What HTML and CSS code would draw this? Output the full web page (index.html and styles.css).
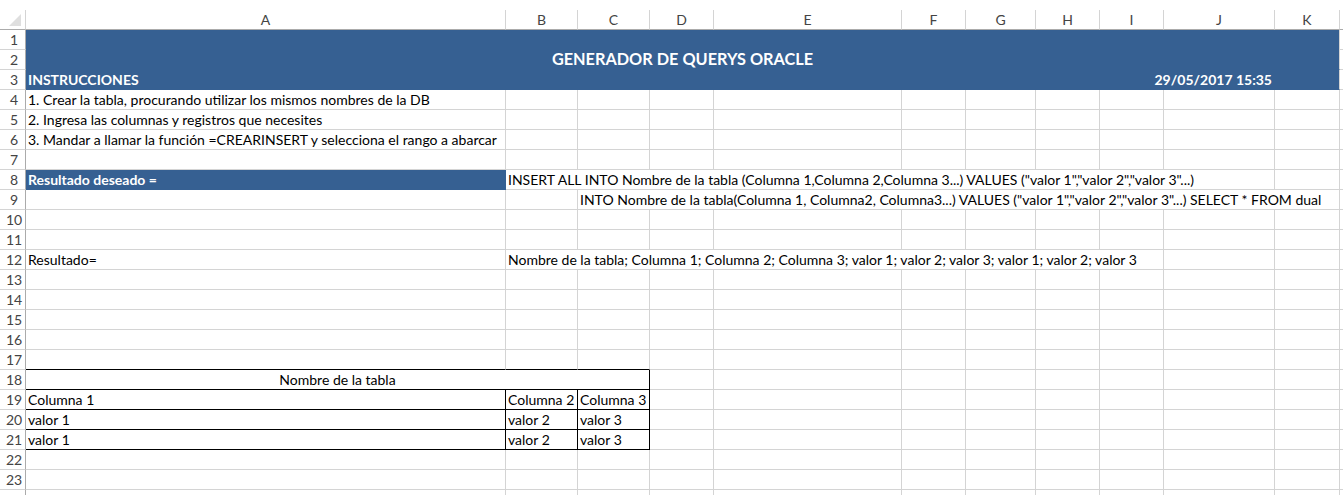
FILE: index.html
```html
<!DOCTYPE html>
<html lang="es">
<head>
    <meta charset="UTF-8">
    <meta name="viewport" content="width=device-width, initial-scale=1.0">
    <title>Generador de querys Oracle</title>
    <link rel="stylesheet" href="styles.css">
</head>
<body>
    <table class="sheet">
        <colgroup>
            <col class="w-head">
            <col class="w-a">
            <col class="w-b">
            <col class="w-c">
            <col class="w-d">
            <col class="w-e">
            <col class="w-f">
            <col class="w-g">
            <col class="w-h">
            <col class="w-i">
            <col class="w-j">
            <col class="w-k">
            <col class="w-l">
        </colgroup>
        <thead>
            <tr class="letters">
                <th class="corner"><span class="tri"></span></th>
                <th>A</th><th>B</th><th>C</th><th>D</th><th>E</th><th>F</th>
                <th>G</th><th>H</th><th>I</th><th>J</th><th>K</th><th class="rest"></th>
            </tr>
        </thead>
        <tbody>
            <tr>
                <th>1</th>
                <td class="band title" colspan="11" rowspan="2">GENERADOR DE QUERYS ORACLE</td>
                <td></td>
            </tr>
            <tr><th>2</th><td></td></tr>
            <tr>
                <th>3</th>
                <td class="band bold">INSTRUCCIONES</td>
                <td class="band" colspan="7"></td>
                <td class="band bold right" colspan="2">29/05/2017 15:35</td>
                <td class="band last"></td>
                <td></td>
            </tr>
            <tr>
                <th>4</th>
                <td>1. Crear la tabla, procurando utilizar los mismos nombres de la DB</td>
                <td></td><td></td><td></td><td></td><td></td><td></td><td></td><td></td><td></td><td></td><td></td>
            </tr>
            <tr>
                <th>5</th>
                <td>2. Ingresa las columnas y registros que necesites</td>
                <td></td><td></td><td></td><td></td><td></td><td></td><td></td><td></td><td></td><td></td><td></td>
            </tr>
            <tr>
                <th>6</th>
                <td>3. Mandar a llamar la función =CREARINSERT y selecciona el rango a abarcar</td>
                <td></td><td></td><td></td><td></td><td></td><td></td><td></td><td></td><td></td><td></td><td></td>
            </tr>
            <tr>
                <th>7</th>
                <td></td><td></td><td></td><td></td><td></td><td></td><td></td><td></td><td></td><td></td><td></td><td></td>
            </tr>
            <tr>
                <th>8</th>
                <td class="band bold">Resultado deseado =</td>
                <td colspan="9">INSERT ALL INTO Nombre de la tabla (Columna 1,Columna 2,Columna 3...) VALUES ("valor 1","valor 2","valor 3"...)</td>
                <td></td><td></td>
            </tr>
            <tr>
                <th>9</th>
                <td></td><td></td>
                <td colspan="9">INTO Nombre de la tabla(Columna 1, Columna2, Columna3...) VALUES ("valor 1","valor 2","valor 3"...) SELECT * FROM dual</td>
                <td></td>
            </tr>
            <tr>
                <th>10</th>
                <td></td><td></td><td></td><td></td><td></td><td></td><td></td><td></td><td></td><td></td><td></td><td></td>
            </tr>
            <tr>
                <th>11</th>
                <td></td><td></td><td></td><td></td><td></td><td></td><td></td><td></td><td></td><td></td><td></td><td></td>
            </tr>
            <tr>
                <th>12</th>
                <td>Resultado=</td>
                <td colspan="8">Nombre de la tabla; Columna 1; Columna 2; Columna 3; valor 1; valor 2; valor 3; valor 1; valor 2; valor 3</td>
                <td></td><td></td><td></td>
            </tr>
            <tr>
                <th>13</th>
                <td></td><td></td><td></td><td></td><td></td><td></td><td></td><td></td><td></td><td></td><td></td><td></td>
            </tr>
            <tr>
                <th>14</th>
                <td></td><td></td><td></td><td></td><td></td><td></td><td></td><td></td><td></td><td></td><td></td><td></td>
            </tr>
            <tr>
                <th>15</th>
                <td></td><td></td><td></td><td></td><td></td><td></td><td></td><td></td><td></td><td></td><td></td><td></td>
            </tr>
            <tr>
                <th>16</th>
                <td></td><td></td><td></td><td></td><td></td><td></td><td></td><td></td><td></td><td></td><td></td><td></td>
            </tr>
            <tr>
                <th>17</th>
                <td class="box-top"></td><td class="box-top"></td><td class="box-top"></td>
                <td></td><td></td><td></td><td></td><td></td><td></td><td></td><td></td><td></td>
            </tr>
            <tr>
                <th>18</th>
                <td class="box center" colspan="3">Nombre de la tabla</td>
                <td></td><td></td><td></td><td></td><td></td><td></td><td></td><td></td><td></td>
            </tr>
            <tr>
                <th>19</th>
                <td class="box">Columna 1</td><td class="box">Columna 2</td><td class="box">Columna 3</td>
                <td></td><td></td><td></td><td></td><td></td><td></td><td></td><td></td><td></td>
            </tr>
            <tr>
                <th>20</th>
                <td class="box">valor 1</td><td class="box">valor 2</td><td class="box">valor 3</td>
                <td></td><td></td><td></td><td></td><td></td><td></td><td></td><td></td><td></td>
            </tr>
            <tr>
                <th>21</th>
                <td class="box">valor 1</td><td class="box">valor 2</td><td class="box">valor 3</td>
                <td></td><td></td><td></td><td></td><td></td><td></td><td></td><td></td><td></td>
            </tr>
            <tr>
                <th>22</th>
                <td></td><td></td><td></td><td></td><td></td><td></td><td></td><td></td><td></td><td></td><td></td><td></td>
            </tr>
            <tr>
                <th>23</th>
                <td></td><td></td><td></td><td></td><td></td><td></td><td></td><td></td><td></td><td></td><td></td><td></td>
            </tr>
            <tr>
                <th></th>
                <td></td><td></td><td></td><td></td><td></td><td></td><td></td><td></td><td></td><td></td><td></td><td></td>
            </tr>
        </tbody>
    </table>
</body>
</html>
```

FILE: styles.css
```css
body {
    margin: 0;
    padding-top: 10px;
    background: #fff;
    font-family: Lato, "Open Sans", sans-serif;
    font-size: 14px;
    color: #000;
    overflow: hidden;
}
.sheet {
    table-layout: fixed;
    border-collapse: separate;
    border-spacing: 0;
    width: 1343px;
}
.w-head { width: 26px; }
.w-a { width: 480px; }
.w-b { width: 72px; }
.w-c { width: 72px; }
.w-d { width: 64px; }
.w-e { width: 188px; }
.w-f { width: 64px; }
.w-g { width: 70px; }
.w-h { width: 64px; }
.w-i { width: 64px; }
.w-j { width: 111px; }
.w-k { width: 65px; }
.w-l { width: 3px; }

.sheet tr {
    height: 20px;
}
.sheet td,
.sheet th {
    box-sizing: border-box;
    height: 20px;
    padding: 0 2px;
    border-right: 1px solid #d4d4d4;
    border-bottom: 1px solid #d4d4d4;
    white-space: nowrap;
    overflow: hidden;
    line-height: 18px;
    vertical-align: bottom;
    text-align: left;
}

/* encabezados */
.letters th {
    text-align: center;
    font-weight: normal;
    color: #444;
    border-bottom-color: #ababab;
}
.letters th.rest {
    border-right: none;
}
.corner {
    padding: 0;
}
.corner .tri {
    display: block;
    width: 0;
    height: 0;
    margin: 0 2px 3px auto;
    border-left: 12px solid transparent;
    border-bottom: 12px solid #dfdfdf;
}
.sheet tbody th {
    padding: 0 0 0 3px;
    text-align: center;
    font-weight: normal;
    color: #444;
    border-right-color: #ababab;
}
tbody td:last-child {
    border-right: none;
}

/* celdas con relleno */
.band {
    background: #366092;
    color: #fff;
}
.sheet td.band {
    border-right-color: #366092;
    border-bottom-color: #366092;
}
.sheet td.title {
    text-align: center;
    font-size: 16.3px;
    font-weight: bold;
    padding-bottom: 1px;
    border-right-color: #d4d4d4;
}
.sheet td.last {
    border-right-color: #d4d4d4;
}
.bold {
    font-weight: bold;
}
.sheet td.right {
    text-align: right;
}
.sheet td.center {
    text-align: center;
}

/* tabla de ejemplo */
.sheet td.box-top {
    border-bottom-color: #000;
}
.sheet td.box {
    border-right-color: #000;
    border-bottom-color: #000;
}
```
